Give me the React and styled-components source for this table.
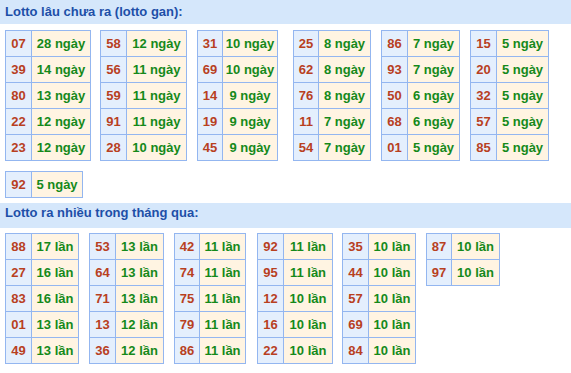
import React from 'react';
import styled, { createGlobalStyle } from 'styled-components';

const GlobalStyle = createGlobalStyle`
  body {
    margin: 0;
    background: #ffffff;
    font-family: "Liberation Sans", Arial, sans-serif;
  }
`;

// each block: left gap, number column width, count column width, rows
const ganBlocks = [
  { gap: 5, numW: 26, valW: 59, rows: [['07', 28], ['39', 14], ['80', 13], ['22', 12], ['23', 12]] },
  { gap: 9, numW: 26, valW: 60, rows: [['58', 12], ['56', 11], ['59', 11], ['91', 11], ['28', 10]] },
  { gap: 10, numW: 25, valW: 55, rows: [['31', 10], ['69', 10], ['14', 9], ['19', 9], ['45', 9]] },
  { gap: 15, numW: 25, valW: 52, rows: [['25', 8], ['62', 8], ['76', 8], ['11', 7], ['54', 7]] },
  { gap: 10, numW: 26, valW: 52, rows: [['86', 7], ['93', 7], ['50', 6], ['68', 6], ['01', 5]] },
  { gap: 10, numW: 26, valW: 52, rows: [['15', 5], ['20', 5], ['32', 5], ['57', 5], ['85', 5]] },
];

const extraGan = { gap: 5, numW: 26, valW: 51, rows: [['92', 5]] };

const hotBlocks = [
  { gap: 5, numW: 26, valW: 47, rows: [['88', 17], ['27', 16], ['83', 16], ['01', 13], ['49', 13]] },
  { gap: 10, numW: 26, valW: 48, rows: [['53', 13], ['64', 13], ['71', 13], ['13', 12], ['36', 12]] },
  { gap: 10, numW: 25, valW: 46, rows: [['42', 11], ['74', 11], ['75', 11], ['79', 11], ['86', 11]] },
  { gap: 11, numW: 26, valW: 49, rows: [['92', 11], ['95', 11], ['12', 10], ['16', 10], ['22', 10]] },
  { gap: 9, numW: 26, valW: 47, rows: [['35', 10], ['44', 10], ['57', 10], ['69', 10], ['84', 10]] },
  { gap: 10, numW: 25, valW: 48, rows: [['87', 10], ['97', 10]] },
];

const StatBlock = ({ block, unit }) => (
  <Block $gap={block.gap} $numW={block.numW} $valW={block.valW}>
    {block.rows.map(([num, count]) => (
      <React.Fragment key={num}>
        <NumCell>{num}</NumCell>
        <CountCell>{count} {unit}</CountCell>
      </React.Fragment>
    ))}
  </Block>
);

const App = () => (
  <Page>
    <GlobalStyle />
    <Title $lh={24} $pb={0}>Lotto lâu chưa ra (lotto gan):</Title>
    <BlockRow $top={6}>
      {ganBlocks.map((b, i) => <StatBlock key={i} block={b} unit="ngày" />)}
    </BlockRow>
    <BlockRow $top={10}>
      <StatBlock block={extraGan} unit="ngày" />
    </BlockRow>
    <Title $lh={19} $pb={6} $mt={5}>Lotto ra nhiều trong tháng qua:</Title>
    <BlockRow $top={5}>
      {hotBlocks.map((b, i) => <StatBlock key={i} block={b} unit="lần" />)}
    </BlockRow>
  </Page>
);

export default App;

const Page = styled.div`
  width: 571px;
  height: 373px;
  overflow: hidden;
`;

const Title = styled.div`
  background: #d5e7fb;
  color: #1d4fa8;
  font-size: 13px;
  font-weight: bold;
  line-height: ${(p) => p.$lh}px;
  padding: 0 0 ${(p) => p.$pb}px 5px;
  margin-top: ${(p) => p.$mt || 0}px;
`;

const BlockRow = styled.div`
  display: flex;
  align-items: flex-start;
  margin-top: ${(p) => p.$top}px;
`;

const Block = styled.div`
  display: grid;
  grid-template-columns: ${(p) => p.$numW}px ${(p) => p.$valW}px;
  grid-auto-rows: 26px;
  margin-left: ${(p) => p.$gap}px;
  border-left: 1px solid #93b6f0;
  border-top: 1px solid #93b6f0;
  font-size: 13px;
  font-weight: bold;
`;

const Cell = styled.div`
  box-sizing: border-box;
  border-right: 1px solid #93b6f0;
  border-bottom: 1px solid #93b6f0;
  line-height: 25px;
  text-align: center;
  white-space: nowrap;
`;

const NumCell = styled(Cell)`
  background: #e4effd;
  color: #b8401f;
`;

const CountCell = styled(Cell)`
  background: #fff4e2;
  color: #15891a;
`;
